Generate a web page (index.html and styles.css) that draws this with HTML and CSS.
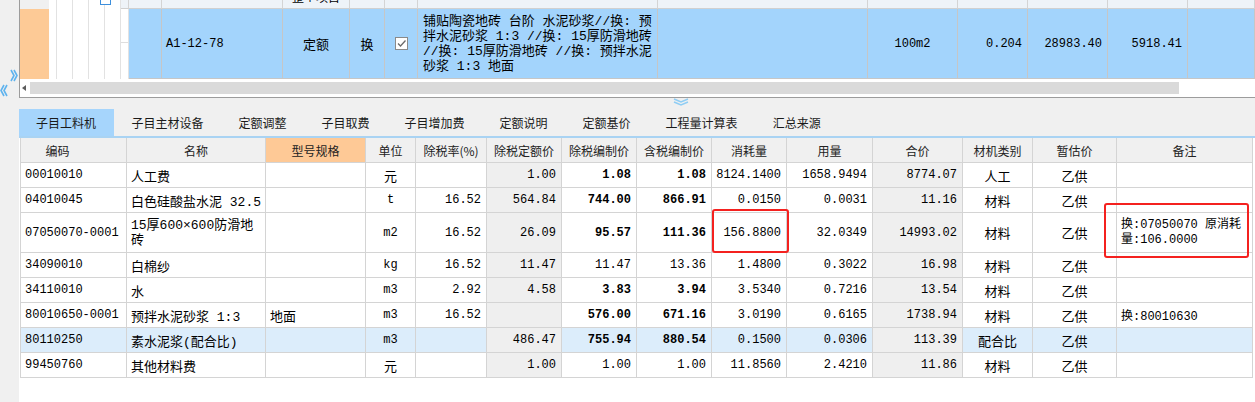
FILE: index.html
```html
<!DOCTYPE html>
<html lang="zh-CN">
<head>
<meta charset="utf-8">
<title>子目工料机</title>
<link rel="stylesheet" href="styles.css">
</head>
<body>
<div class="app">
  <div class="side">
    <svg class="chev-r" width="8" height="15" viewBox="0 0 8 15"><path d="M1 2 L4 7.5 L1 13 M4 2 L7 7.5 L4 13" fill="none" stroke="#5fb3ee" stroke-width="1.6"/></svg>
    <svg class="chev-l" width="8" height="15" viewBox="0 0 8 15"><path d="M7 2 L4 7.5 L7 13 M4 2 L1 7.5 L4 13" fill="none" stroke="#5fb3ee" stroke-width="1.6"/></svg>
  </div>
  <div class="main">
    <div class="top">
      <span class="topcheck"></span>
      <div class="tgrid">
        <div class="tc g0"></div>
        <div class="tc lw"></div><div class="tc lw"></div><div class="tc lw"></div><div class="tc lw"></div><div class="tc lw"></div>
        <div class="tc hc"></div>
        <div class="tc hc"></div>
        <div class="tc hc"></div>
        <div class="tc hc clip"><span>整个项目</span></div>
        <div class="tc hc"></div>
        <div class="tc hc"></div>
        <div class="tc hc"></div>
        <div class="tc hc"></div>
        <div class="tc hc"></div>
        <div class="tc hc"></div>
        <div class="tc hc"></div>
        <div class="tc hc"></div>
        <div class="tc hc"></div>

        <div class="tc or"></div>
        <div class="tc lw"></div><div class="tc lw"></div><div class="tc lw"></div><div class="tc lw"></div><div class="tc lw"></div>
        <div class="tc lw hl"></div>
        <div class="tc bc"></div>
        <div class="tc bc l">A1-12-78</div>
        <div class="tc bc c cj">定额</div>
        <div class="tc bc c cj">换</div>
        <div class="tc bc c"><span class="cb"><svg width="11" height="11" viewBox="0 0 11 11"><path d="M2 5.5 L4.5 8 L9.5 2.5" fill="none" stroke="#6a6a6a" stroke-width="1.3"/></svg></span></div>
        <div class="tc bc desc">铺贴陶瓷地砖 台阶 水泥砂浆//换: 预<br>拌水泥砂浆 1:3 //换: 15厚防滑地砖<br>//换: 15厚防滑地砖 //换: 预拌水泥<br>砂浆 1:3 地面</div>
        <div class="tc bc"></div>
        <div class="tc bc c">100m2</div>
        <div class="tc bc r">0.204</div>
        <div class="tc bc r">28983.40</div>
        <div class="tc bc r">5918.41</div>
        <div class="tc bc"></div>
      </div>
      <div class="scroll">
        <div class="arrow"><span class="tri"></span></div>
        <div class="track"></div>
      </div>
    </div>
    <div class="splitter">
      <svg width="16" height="8" viewBox="0 0 16 8"><path d="M1 1 L8 4 L15 1 M1 4 L8 7 L15 4" fill="none" stroke="#8fcdf4" stroke-width="1.4"/></svg>
    </div>
    <div class="tabs">
      <div class="tab active">子目工料机</div>
      <div class="tab">子目主材设备</div>
      <div class="tab">定额调整</div>
      <div class="tab">子目取费</div>
      <div class="tab">子目增加费</div>
      <div class="tab">定额说明</div>
      <div class="tab">定额基价</div>
      <div class="tab">工程量计算表</div>
      <div class="tab">汇总来源</div>
    </div>
    <div class="tablewrap">
      <div class="grid">
        <div class="h first">编码</div><div class="h">名称</div><div class="h orange">型号规格</div><div class="h">单位</div><div class="h">除税率(%)</div><div class="h">除税定额价</div><div class="h">除税编制价</div><div class="h">含税编制价</div><div class="h">消耗量</div><div class="h">用量</div><div class="h">合价</div><div class="h">材机类别</div><div class="h">暂估价</div><div class="h">备注</div>

        <div class="d l">00010010</div><div class="d l cj">人工费</div><div class="d"></div><div class="d c cj">元</div><div class="d r"></div><div class="d r g">1.00</div><div class="d r b">1.08</div><div class="d r b">1.08</div><div class="d r">8124.1400</div><div class="d r">1658.9494</div><div class="d r g">8774.07</div><div class="d c cj">人工</div><div class="d c cj">乙供</div><div class="d l"></div>

        <div class="d l">04010045</div><div class="d l cj">白色硅酸盐水泥 32.5</div><div class="d"></div><div class="d c">t</div><div class="d r">16.52</div><div class="d r g">564.84</div><div class="d r b">744.00</div><div class="d r b">866.91</div><div class="d r">0.0150</div><div class="d r">0.0031</div><div class="d r g">11.16</div><div class="d c cj">材料</div><div class="d c cj">乙供</div><div class="d l"></div>

        <div class="d l">07050070-0001</div><div class="d l cj ml">15厚600×600防滑地<br>砖</div><div class="d"></div><div class="d c">m2</div><div class="d r">16.52</div><div class="d r g">26.09</div><div class="d r b">95.57</div><div class="d r b">111.36</div><div class="d r">156.8800</div><div class="d r">32.0349</div><div class="d r g">14993.02</div><div class="d c cj">材料</div><div class="d c cj">乙供</div><div class="d l ml">换:07050070 原消耗<br>量:106.0000</div>

        <div class="d l">34090010</div><div class="d l cj">白棉纱</div><div class="d"></div><div class="d c">kg</div><div class="d r">16.52</div><div class="d r g">11.47</div><div class="d r">11.47</div><div class="d r">13.36</div><div class="d r">1.4800</div><div class="d r">0.3022</div><div class="d r g">16.98</div><div class="d c cj">材料</div><div class="d c cj">乙供</div><div class="d l"></div>

        <div class="d l">34110010</div><div class="d l cj">水</div><div class="d"></div><div class="d c">m3</div><div class="d r">2.92</div><div class="d r g">4.58</div><div class="d r b">3.83</div><div class="d r b">3.94</div><div class="d r">3.5340</div><div class="d r">0.7216</div><div class="d r g">13.54</div><div class="d c cj">材料</div><div class="d c cj">乙供</div><div class="d l"></div>

        <div class="d l">80010650-0001</div><div class="d l cj">预拌水泥砂浆 1:3</div><div class="d l cj">地面</div><div class="d c">m3</div><div class="d r">16.52</div><div class="d r g"></div><div class="d r b">576.00</div><div class="d r b">671.16</div><div class="d r">3.0190</div><div class="d r">0.6165</div><div class="d r g">1738.94</div><div class="d c cj">材料</div><div class="d c cj">乙供</div><div class="d l">换:80010630</div>

        <div class="d l sel">80110250</div><div class="d l cj sel">素水泥浆(配合比)</div><div class="d sel"></div><div class="d c sel">m3</div><div class="d r sel"></div><div class="d r g">486.47</div><div class="d r b sel">755.94</div><div class="d r b sel">880.54</div><div class="d r sel">0.1500</div><div class="d r sel">0.0306</div><div class="d r g">113.39</div><div class="d c cj sel">配合比</div><div class="d c cj sel">乙供</div><div class="d l sel"></div>

        <div class="d l">99450760</div><div class="d l cj">其他材料费</div><div class="d"></div><div class="d c cj">元</div><div class="d r"></div><div class="d r g">1.00</div><div class="d r">1.00</div><div class="d r">1.00</div><div class="d r">11.8560</div><div class="d r">2.4210</div><div class="d r g">11.86</div><div class="d c cj">材料</div><div class="d c cj">乙供</div><div class="d l"></div>
      </div>
      <div class="mark mark1"></div>
      <div class="mark mark2"></div>
    </div>
  </div>
</div>
</body>
</html>
```
FILE: styles.css
```css
* { box-sizing: border-box; }
html, body { margin: 0; padding: 0; }
body {
  background: #f0f0f0;
  width: 1255px;
  height: 402px;
  overflow: hidden;
  font-family: "Liberation Mono", "Noto Sans CJK SC", monospace;
  font-size: 12px;
  color: #000;
}
.app { display: flex; height: 402px; }
.side { width: 19px; flex: none; padding-top: 68px; }
.side svg { display: block; }
.chev-r { margin-left: 10px; }
.chev-l { margin-left: 0; }

.main { flex: 1; display: flex; flex-direction: column; min-width: 0; }

/* top grid */
.top {
  position: relative;
  height: 98px;
  background: #fff;
  border-left: 1px solid #9c9c9c;
  border-bottom: 1px solid #9c9c9c;
}
.topcheck {
  position: absolute;
  left: 80px;
  top: -6px;
  width: 11px;
  height: 11px;
  border: 1px solid #3d8fdc;
  background: #fff;
  z-index: 2;
}
.tgrid {
  display: grid;
  grid-template-columns: 29px 8px 16px 16px 16px 16px 8px 33px 121px 67px 35px 33px 240px 210px 90px 70px 80px 80px 67px;
  grid-template-rows: 9px 70px;
}
.tc { overflow: hidden; display: flex; align-items: center; white-space: nowrap; }
.g0 { background: #f0f0f0; }
.or { background: #fdca96; }
.lw { background: #fff; border-right: 1px solid #e2e2e2; }
.hl { background: linear-gradient(#fff 33px, #dedede 33px, #dedede 34px, #fff 34px); }
.hc { background: #eef3f8; border-right: 1px solid #d4d4d4; border-bottom: 1px solid #d0d0d0; }
.bc { background: #a3d4fc; border-right: 1px solid #c6c6c6; border-bottom: 1px solid #c6c6c6; }
.clip { justify-content: center; align-items: flex-end; padding-bottom: 5px; line-height: 12px; }
.clip span { font-family: "Noto Sans CJK SC", sans-serif; font-size: 12px; }
.tc.l { padding-left: 4px; }
.tc.c { justify-content: center; }
.tc.r { justify-content: flex-end; padding-right: 5px; }
.cj { font-size: 13px; }
.cb {
  display: flex;
  align-items: center;
  justify-content: center;
  width: 13px;
  height: 13px;
  background: #fff;
  border: 1px solid #8a8a8a;
}
.cb svg { display: block; }
.desc { padding-left: 5px; font-size: 13px; line-height: 15px; }

.scroll { display: flex; height: 18px; padding-top: 3px; }
.arrow { width: 10px; height: 12px; display: flex; align-items: center; padding-left: 2px; }
.tri {
  width: 0; height: 0;
  border-right: 4px solid #5c5c5c;
  border-top: 3px solid transparent;
  border-bottom: 3px solid transparent;
}
.track { width: 1149px; height: 12px; background: #dadada; }

.splitter { height: 11px; padding-left: 654px; }
.splitter svg { display: block; }

/* tabs */
.tabs {
  display: flex;
  height: 29px;
  border-bottom: 2px solid #a9d3f3;
}
.tab {
  padding: 0 17.5px;
  line-height: 27px;
  font-family: "Noto Sans CJK SC", sans-serif;
  font-size: 12px;
  color: #1a1a1a;
  white-space: nowrap;
}
.tab.active { background: #a6d5fc; padding: 0 18px 0 17px; }

/* table */
.tablewrap { position: relative; flex: 1; background: #fff; padding-left: 1px; }
.grid {
  display: grid;
  width: 1233px;
  grid-template-columns: 106px 139px 100px 50px 71px 75px 75px 75px 75px 86px 90px 70px 84px 136px;
  grid-template-rows: 25px 25px 25px 40px 25px 25px 25px 25px 25px;
  border-left: 1px solid #d4d4d4;
}
.h, .d {
  border-right: 1px solid #d4d4d4;
  border-bottom: 1px solid #d4d4d4;
  display: flex;
  align-items: center;
  overflow: hidden;
  white-space: nowrap;
}
.h {
  background: #f0f0f0;
  justify-content: center;
  font-family: "Noto Sans CJK SC", sans-serif;
  font-size: 12px;
  color: #222;
}
.h.first { padding-right: 32px; }
.h.orange { background: #fec996; }
.d { background: #fff; }
.d.l { padding-left: 4px; }
.d.c { justify-content: center; }
.d.r { justify-content: flex-end; padding-right: 5px; }
.d.b { font-weight: bold; }
.d.g { background: #efefef; }
.d.sel { background: #dcedfb; }
.d.ml { line-height: 15px; }
.d.cj { font-size: 13px; }

.mark {
  position: absolute;
  border: 2px solid #f4211f;
  border-radius: 3px;
}
.mark1 { left: 693px; top: 71px; width: 77px; height: 44px; }
.mark2 { left: 1085px; top: 65px; width: 145px; height: 55px; }
```
